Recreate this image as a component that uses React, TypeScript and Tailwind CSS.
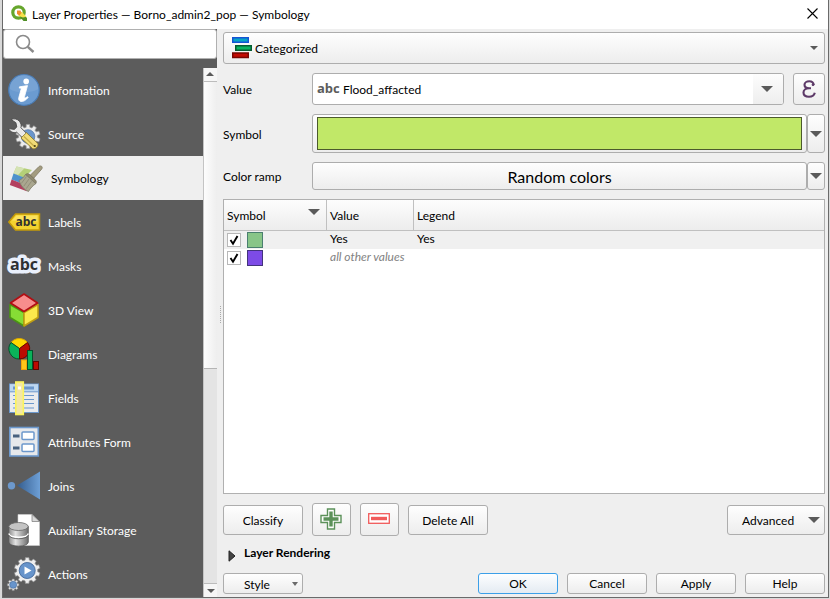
import React, { useState } from "react";

const buttonFace =
  "rounded-[3px] border border-[#adadad] bg-linear-to-b from-[#fefefe] to-[#ededed]";

function DownArrow({ small = false }: { small?: boolean }) {
  return (
    <svg
      aria-hidden="true"
      className={small ? "h-1 w-2 shrink-0" : "h-1.5 w-3 shrink-0"}
      viewBox="0 0 12 6"
      preserveAspectRatio="none"
    >
      <path d="M0 0h12L6 6z" fill="#5a5a5a" />
    </svg>
  );
}

function gearPath(cx: number, cy: number, outer: number, inner: number, teeth: number) {
  const points: string[] = [];
  const step = (Math.PI * 2) / teeth;
  for (let i = 0; i < teeth; i++) {
    const a = i * step - Math.PI / 2;
    const corners: [number, number][] = [
      [a - step * 0.32, inner],
      [a - step * 0.22, outer],
      [a + step * 0.22, outer],
      [a + step * 0.32, inner],
    ];
    corners.forEach(([t, r]) =>
      points.push(`${(cx + Math.cos(t) * r).toFixed(2)} ${(cy + Math.sin(t) * r).toFixed(2)}`)
    );
  }
  return `M${points.join("L")}Z`;
}

function Icon({ children, className = "h-8 w-8" }: { children: React.ReactNode; className?: string }) {
  return (
    <svg aria-hidden="true" className={`${className} shrink-0 overflow-visible`} viewBox="0 0 32 32">
      {children}
    </svg>
  );
}

const InfoIcon = () => (
  <Icon>
    <circle cx="16" cy="16" r="15.3" fill="#6b9bd0" stroke="#4a7cb5" strokeWidth="1.2" />
    <path d="M1.8 15a14.2 14.2 0 0 1 28.4 0c-6 4-22 5-28.4 0z" fill="#8fb3dd" opacity=".35" />
    <circle cx="18.2" cy="7.4" r="2.8" fill="#fff" />
    <path
      d="M11.5 12.8l8-1.2-3 11.200c-.3 1.400.8 1.600 3-.2l.6.9c-2.400 3-5 4.300-7.200 4-2-.3-2.600-2-2.100-3.900l2.300-8.300c.2-1-.4-1.200-1.800-1.200z"
      fill="#fff"
      stroke="#fff"
      strokeWidth=".8"
    />
  </Icon>
);

const SourceIcon = () => (
  <Icon>
    <path d={gearPath(20, 18.5, 12.2, 9.4, 10)} fill="#ececec" stroke="#9a9a9a" strokeWidth=".7" />
    <circle cx="20" cy="18.5" r="6.8" fill="#6b96cb" stroke="#4b6fa0" strokeWidth=".7" />
    <path
      d="M3 1.5C6 .2 9.500.8 11.500 3.400c1.700 2 2 4.300 1.400 6.300l7 7-4.200 4.300-7-6.800C5.500 15.300 2 14 .6 10.600l5.700.8 2.500-2.400-.9-4.300z"
      fill="#e9e9e9"
      stroke="#4c4c4c"
      strokeWidth=".9"
      strokeLinejoin="round"
    />
    <path d="M18.500 14.700l-5.500 5.300 11.500 10.500c2.500 1.400 6.500-2.200 5.300-5z" fill="#f1dc78" stroke="#8c7a29" strokeWidth=".9" />
    <path d="M16 18.500L26 28" stroke="#c4ab45" strokeWidth="1.2" />
    <circle cx="26.800" cy="28" r="1.100" fill="#4c4210" />
  </Icon>
);

const SymbologyIcon = () => (
  <svg aria-hidden="true" className="h-8 w-[35px] shrink-0 overflow-visible" viewBox="0 0 35 32">
    <path d="M8.500 4.500L24 8l-8 8-10.500-4.500z" fill="#b4cf78" />
    <path d="M8.500 4.500l8 1.800L10 13l-4.500-1.500z" fill="#d5e3b4" />
    <path d="M5.500 11.500L16 15.500 12.500 21 3.500 17.500z" fill="#4d92cc" />
    <path d="M3.500 17.500l9 3.500 7 8.500L1.800 23z" fill="#b3405f" />
    <path d="M21.500 14L31 4.500c2-1.500 4.200.3 2.700 2.600L25 17z" fill="#a39c80" stroke="#7d7760" strokeWidth=".8" />
    <path d="M17.500 12.500c1.500-1.200 3-1.200 4.500.3l5 4.700c1.500 1.500 1.700 2.700.8 4.200z" fill="#8f896e" stroke="#6f6a57" strokeWidth=".7" />
    <path d="M17.500 12.500l10.300 9.200c-2.500 1.500-5.300 4.300-7.300 7.800C16 27.500 12.500 23.500 11 18.500c2.700-1.200 5-3.500 6.500-6z" fill="#aaa78f" stroke="#7e7b68" strokeWidth=".8" />
    <path d="M18.500 14.500l-5.200 7M21 17l-5.300 7.300M23.500 19.300l-5.300 7.400" stroke="#86836f" strokeWidth=".7" />
  </svg>
);

const LabelsIcon = () => (
  <Icon>
    <path d="M.8 16L7.500 8h24v16h-24z" fill="#f3d22e" stroke="#c49a08" strokeWidth="1.500" />
    <path d="M4 14.500L8.500 9.500h21v6z" fill="#fae25e" />
    <text x="18" y="20" textAnchor="middle" fontFamily="Open Sans, sans-serif" fontWeight="700" fontSize="12" fill="#303030">
      abc
    </text>
  </Icon>
);

const MasksIcon = () => (
  <Icon>
    <text
      x="16"
      y="20"
      textAnchor="middle"
      fontFamily="Open Sans, sans-serif"
      fontWeight="700"
      fontSize="16"
      fill="#2e3134"
      stroke="#eaf0fc"
      strokeWidth="7"
      strokeLinejoin="round"
      paintOrder="stroke"
    >
      abc
    </text>
  </Icon>
);

const CubeIcon = () => (
  <Icon>
    <path d="M2 10.500l14 8V32L2 23.500z" fill="#86dc35" stroke="#4a9414" strokeWidth="1.600" strokeLinejoin="round" />
    <path d="M30 10.500l-14 8V32l14-8.500z" fill="#fbe84c" stroke="#bf9e13" strokeWidth="1.600" strokeLinejoin="round" />
    <path d="M16 0L29.500 9 16 17.500 2.500 9z" fill="#f78d8d" stroke="#b10e13" strokeWidth="1.600" strokeLinejoin="round" />
  </Icon>
);

const DiagramsIcon = () => (
  <Icon>
    <path d="M11.500 10.500L3 4.500a10.500 10.500 0 0 1 16.500 0z" fill="#ffd900" stroke="#d9a600" />
    <path d="M11.500 10.500V21A10.300 10.300 0 0 1 3 4.500z" fill="#0ab25a" stroke="#05502b" />
    <path d="M11.500 10.500V21A10.300 10.300 0 0 0 19.500 4.500z" fill="#bb0b02" stroke="#5d0601" />
    <rect x="13.500" y="22" width="5" height="9.500" fill="#ffc61a" stroke="#f0a30a" />
    <rect x="19.500" y="12.500" width="5" height="19" fill="#0ab25a" stroke="#05502b" />
    <rect x="25.500" y="23.500" width="5" height="8" fill="#bb0b02" stroke="#5d0601" />
  </Icon>
);

const FieldsIcon = () => (
  <Icon>
    <rect x="1.500" y="2" width="29" height="28.500" fill="#e9ebee" stroke="#6c98cc" />
    <rect x="2" y="2.500" width="28" height="7" fill="#bcd7f1" />
    <path d="M1.500 9.800h29" stroke="#6c98cc" />
    <rect x="5" y="4.500" width="21" height="3" fill="#6c98cc" />
    <path d="M5 13.500h21M5 17.500h21M5 21.500h21M5 26h21" stroke="#6c98cc" strokeWidth="1.200" />
    <rect x="7.800" y="0" width="7.500" height="32.500" fill="#f2e7a6" stroke="#fbf45c" strokeWidth="1.600" />
    <rect x="10" y="4.500" width="3" height="3" fill="#fff" />
  </Icon>
);

const FormIcon = () => (
  <Icon>
    <rect x="1.800" y="1.500" width="28.500" height="28.500" fill="#e7e9ec" stroke="#6c98cc" strokeWidth="1.600" />
    <rect x="14" y="6" width="12" height="7.500" rx="1" fill="#fff" stroke="#6c98cc" strokeWidth="1.500" />
    <rect x="14" y="18" width="12" height="7.500" rx="1" fill="#fff" stroke="#6c98cc" strokeWidth="1.500" />
    <path d="M5 10h6.500M5 22h6.500" stroke="#49627f" strokeWidth="3" />
  </Icon>
);

const JoinsIcon = () => (
  <Icon>
    <defs>
      <linearGradient id="joinFill">
        <stop offset="0" stopColor="#345c8d" />
        <stop offset="1" stopColor="#6ea0d7" />
      </linearGradient>
    </defs>
    <path d="M9 15.500L32 1.500v28z" fill="url(#joinFill)" />
    <circle cx="3.500" cy="15.800" r="3.700" fill="#6c98cc" />
  </Icon>
);

const StorageIcon = () => (
  <Icon>
    <defs>
      <linearGradient id="drum">
        <stop offset="0" stopColor="#8d8d8d" />
        <stop offset=".35" stopColor="#e3e3e3" />
        <stop offset="1" stopColor="#6d6d6d" />
      </linearGradient>
    </defs>
    <path d="M10 .5h14l7.500 7v24H10z" fill="#fff" stroke="#d0d0d0" strokeWidth=".6" />
    <path d="M24 .5v7h7.500z" fill="#d9d9d9" stroke="#777" strokeWidth=".7" />
    <path d="M.8 12.500v15.500c0 5.500 19.500 5.500 19.500 0V12.500z" fill="url(#drum)" stroke="#555" strokeWidth=".8" />
    <path d="M.8 19.500c1 5 18.500 5 19.500 0" fill="none" stroke="#fff" strokeWidth="1.300" />
    <path d="M.8 21c1 5 18.500 5 19.500 0" fill="none" stroke="#555" strokeWidth=".8" />
    <ellipse cx="10.500" cy="12.500" rx="9.700" ry="4" fill="#c4c4c4" stroke="#666" strokeWidth=".8" />
  </Icon>
);

const ActionsIcon = () => (
  <Icon>
    <path d={gearPath(19.2, 12.5, 13, 10.6, 10)} fill="#efefef" stroke="#888" strokeWidth=".7" />
    <circle cx="19.200" cy="12.500" r="8" fill="#6794cb" stroke="#44699a" strokeWidth=".9" />
    <path d="M16.500 8.500v8l7-4z" fill="#fff" />
    <path d={gearPath(5.2, 26.8, 5.9, 4.5, 8)} fill="#e5e5e5" stroke="#888" strokeWidth=".6" />
    <circle cx="5.200" cy="26.800" r="3.500" fill="#6794cb" stroke="#44699a" strokeWidth=".6" />
  </Icon>
);

const pages = [
  { name: "Information", Glyph: InfoIcon },
  { name: "Source", Glyph: SourceIcon },
  { name: "Symbology", Glyph: SymbologyIcon },
  { name: "Labels", Glyph: LabelsIcon },
  { name: "Masks", Glyph: MasksIcon },
  { name: "3D View", Glyph: CubeIcon },
  { name: "Diagrams", Glyph: DiagramsIcon },
  { name: "Fields", Glyph: FieldsIcon },
  { name: "Attributes Form", Glyph: FormIcon },
  { name: "Joins", Glyph: JoinsIcon },
  { name: "Auxiliary Storage", Glyph: StorageIcon },
  { name: "Actions", Glyph: ActionsIcon },
];

function TitleBar() {
  return (
    <header className="flex h-[29px] shrink-0 items-center bg-white pr-2 pl-2">
      <svg aria-hidden="true" className="mr-[5px] mb-1 h-4 w-4 shrink-0" viewBox="0 0 16 16">
        <circle cx="7.500" cy="7.500" r="5.700" fill="none" stroke="#66a62c" strokeWidth="3.200" />
        <path d="M9 9h3l4 4v3h-3.500L9 12z" fill="#4f8f24" />
        <path d="M7 7h4l4.500 4.800L12 12.500 7.500 11z" fill="#f3e04a" />
        <path d="M6 5.500h3.500l1 2.500-2 2.500L6 9z" fill="#f08a2c" />
      </svg>
      <h1 className="flex-1 truncate">Layer Properties — Borno_admin2_pop — Symbology</h1>
      <button type="button" aria-label="Close" className="flex h-6 w-4 items-center justify-center pb-0.5">
        <svg aria-hidden="true" className="h-[11px] w-[11px]" viewBox="0 0 11 11">
          <path d="M.5.5l10 10M10.500.5l-10 10" stroke="#000" strokeWidth="1.100" />
        </svg>
      </button>
    </header>
  );
}

function Sidebar() {
  const [current, setCurrent] = useState("Symbology");
  return (
    <aside className="flex w-[214px] shrink-0 flex-col bg-[#5c5c5c]">
      <label className="flex h-[30px] shrink-0 items-center rounded-[3px] border border-[#b0b0b0] bg-white pl-[11px]">
        <svg aria-hidden="true" className="h-5 w-5 shrink-0" viewBox="0 0 20 20" fill="none" stroke="#8a8a8a">
          <circle cx="8" cy="8" r="6.500" strokeWidth="1.600" />
          <path d="M12.800 12.800l5.700 5.200" strokeWidth="2.400" />
        </svg>
        <input type="text" aria-label="Search" className="min-w-0 flex-1 px-2 outline-none" />
      </label>
      <div className="mt-[9px] flex min-h-0 flex-1">
        <nav className="min-w-0 flex-1 overflow-hidden">
          {pages.map(({ name, Glyph }) => (
            <button
              key={name}
              type="button"
              onClick={() => setCurrent(name)}
              className={
                name === current
                  ? "flex h-11 w-full items-center gap-2 bg-[#efefef] pl-[5px] text-left text-black"
                  : "flex h-11 w-full items-center gap-2 pl-[5px] text-left text-white"
              }
            >
              <Glyph />
              <span className="pt-0.5">{name}</span>
            </button>
          ))}
        </nav>
        <div aria-hidden="true" className="flex w-3.5 shrink-0 flex-col border-l border-[#c4c4c4] bg-[#e4e4e4]">
          <div className="flex h-3.5 shrink-0 rotate-180 items-center justify-center border-t border-[#bcbcbc] bg-[#f6f6f6]">
            <DownArrow small />
          </div>
          <div className="h-[287px] shrink-0 border-b border-[#b4b4b4] bg-linear-to-r from-[#fdfdfd] to-[#eeeeee]" />
          <div className="flex-1" />
          <div className="flex h-3.5 shrink-0 items-center justify-center border-t border-[#bcbcbc] bg-[#f6f6f6]">
            <DownArrow small />
          </div>
        </div>
      </div>
    </aside>
  );
}

function CategoryRow({ color, label, legend, other }: { color: string; label: string; legend: string; other?: boolean }) {
  return (
    <tr className={other ? "h-[18px]" : "h-[18px] bg-[#f0f0f0]"}>
      <td className="p-0">
        <div className="flex h-[18px] items-center gap-1.5 pl-[3px]">
          <span className="relative h-3.5 w-3.5">
            <input
              type="checkbox"
              defaultChecked
              aria-label={`Show ${label}`}
              className="peer block h-3.5 w-3.5 appearance-none border border-[#b8b8b8] bg-white"
            />
            <svg
              aria-hidden="true"
              className="pointer-events-none absolute inset-0 hidden h-3.5 w-3.5 peer-checked:block"
              viewBox="0 0 14 14"
            >
              <path d="M3.500 7l2.500 3.800L10.500 3" fill="none" stroke="#000" strokeWidth="1.900" />
            </svg>
          </span>
          <span className={`h-4 w-4 border ${color}`} />
        </div>
      </td>
      <td className="p-0">
        <div className={other ? "flex h-[18px] items-center pb-0.5 pl-[3px] text-[#828282] italic" : "flex h-[18px] items-center pb-0.5 pl-[3px]"}>
          {label}
        </div>
      </td>
      <td className="p-0">
        <div className="flex h-[18px] items-center pb-0.5 pl-[3px]">{legend}</div>
      </td>
    </tr>
  );
}

function CategoryTable() {
  return (
    <div className="mt-[9px] min-h-0 flex-1 overflow-hidden border border-[#b0b0b0] bg-white">
      <table className="w-full table-fixed border-separate border-spacing-0 whitespace-nowrap">
        <colgroup>
          <col className="w-[103px]" />
          <col className="w-[87px]" />
          <col />
        </colgroup>
        <thead>
          <tr className="h-[31px] bg-linear-to-b from-[#fdfdfd] to-[#ececec] text-left">
            <th className="border-r border-b border-[#c0c0c0] p-0 font-normal">
              <div className="flex items-center justify-between pt-0.5 pr-1.5 pl-[3px]">
                Symbol
                <span className="pb-2">
                  <DownArrow />
                </span>
              </div>
            </th>
            <th className="border-r border-b border-[#c0c0c0] p-0 pt-0.5 pl-[3px] font-normal">Value</th>
            <th className="border-b border-[#c0c0c0] p-0 pt-0.5 pl-[3px] font-normal">Legend</th>
          </tr>
        </thead>
        <tbody>
          <CategoryRow color="border-[#4a7f6f] bg-[#88c588]" label="Yes" legend="Yes" />
          <CategoryRow color="border-[#43347c] bg-[#7d4be6]" label="all other values" legend="" other />
        </tbody>
      </table>
    </div>
  );
}

function SymbologyPanel() {
  const dialogButton = `${buttonFace} h-[21px] w-20`;
  return (
    <main className="relative flex min-w-0 flex-1 flex-col pt-[3px] pr-[3px] pb-[3px] pl-1.5">
      <div aria-hidden="true" className="absolute top-[277px] left-[3px] h-[17px] border-l border-dotted border-[#aaaaaa]" />

      <div className={`${buttonFace} relative h-8 shrink-0`}>
        <svg aria-hidden="true" className="pointer-events-none absolute top-1 left-2 h-[22px] w-5" viewBox="0 0 20 22">
          <rect x=".75" y=".75" width="15.500" height="4.500" fill="#08a5c6" stroke="#1454d4" strokeWidth="1.500" />
          <rect x="3.750" y="8.750" width="15.500" height="4.500" fill="#0ab360" stroke="#045c31" strokeWidth="1.500" />
          <rect x=".75" y="16" width="15.500" height="4.500" fill="#c10b02" stroke="#7a0601" strokeWidth="1.500" />
        </svg>
        <select aria-label="Renderer" className="h-full w-full appearance-none bg-transparent pt-0.5 pr-6 pl-[31px] outline-none">
          <option>Categorized</option>
        </select>
        <span className="pointer-events-none absolute inset-y-0 right-1.5 flex items-center">
          <DownArrow small />
        </span>
      </div>

      <div className="mt-[9px] flex h-8 shrink-0 items-center">
        <label htmlFor="value-field" className="w-[89px] shrink-0 pt-0.5">
          Value
        </label>
        <div className="relative h-full min-w-0 flex-1 overflow-hidden rounded-[3px] border border-[#adadad] bg-white">
          <span
            aria-hidden="true"
            className="pointer-events-none absolute top-1 left-1 font-['Open_Sans',sans-serif] text-[13px] leading-5 font-bold text-[#5c5c5c]"
          >
            abc
          </span>
          <select id="value-field" className="h-full w-full appearance-none bg-transparent pt-0.5 pr-8 pl-[30px] outline-none">
            <option>Flood_affacted</option>
          </select>
          <span className="pointer-events-none absolute inset-y-0 right-0 flex w-[30px] items-center justify-center bg-linear-to-b from-[#fdfdfd] to-[#eeeeee] pr-0.5">
            <DownArrow />
          </span>
        </div>
        <button type="button" aria-label="Expression" className={`${buttonFace} ml-[9px] flex h-8 w-8 items-center justify-center`}>
          <svg aria-hidden="true" className="h-[18px] w-3.5" viewBox="0 0 14 18" fill="none" stroke="#5d3a68">
            <path
              d="M11.800 5.200C11.500 2.500 9.500 1.300 7.300 1.300 4.500 1.300 2.500 2.700 2.500 4.800c0 2.200 2 3.500 4.700 3.500H9M7.200 8.300C3.500 8.300 1.500 10 1.500 12.600c0 2.600 2.300 4.200 5.500 4.200 3 0 5.200-1.500 5.800-4"
              strokeWidth="2.100"
            />
            <circle cx="11" cy="4.800" r=".9" fill="#5d3a68" />
          </svg>
        </button>
      </div>

      <div className="mt-[9px] flex h-[39px] shrink-0 items-center">
        <span className="w-[89px] shrink-0 pt-0.5">Symbol</span>
        <button type="button" aria-label="Change symbol" className={`${buttonFace} h-full min-w-0 flex-1 py-0.5 pr-1 pl-1`}>
          <span className="block h-full w-full border border-[#4c5a2c] bg-[#c1e868]" />
        </button>
        <button type="button" aria-label="Symbol options" className={`${buttonFace} flex h-full w-[18px] items-center justify-center`}>
          <DownArrow />
        </button>
      </div>

      <div className="mt-[9px] flex h-7 shrink-0 items-center">
        <span className="w-[89px] shrink-0 pt-0.5">Color ramp</span>
        <button type="button" className={`${buttonFace} h-full min-w-0 flex-1 pt-0.5 text-base`}>
          Random colors
        </button>
        <button type="button" aria-label="Color ramp options" className={`${buttonFace} flex h-full w-[18px] items-center justify-center`}>
          <DownArrow />
        </button>
      </div>

      <CategoryTable />

      <div className="mt-[9px] flex h-[33px] shrink-0 items-center gap-[9px]">
        <button type="button" className={`${buttonFace} h-[30px] w-20 pt-0.5`}>
          Classify
        </button>
        <button type="button" aria-label="Add category" className={`${buttonFace} flex h-[33px] w-[39px] items-center justify-center pr-0.5 pb-0.5`}>
          <svg aria-hidden="true" className="h-[22px] w-[22px]" viewBox="0 0 22 22">
            <path d="M7.500 1h7v6.500H21v7h-6.500V21h-7v-6.500H1v-7h6.500z" fill="#fff" stroke="#5b9159" strokeWidth="1.400" />
            <path d="M11 3.500v15M3.500 11h15" stroke="#5b9159" strokeWidth="3.400" />
          </svg>
        </button>
        <button type="button" aria-label="Remove category" className={`${buttonFace} flex h-[33px] w-[39px] items-center justify-center pr-0.5 pb-0.5`}>
          <svg aria-hidden="true" className="h-[11px] w-[22px]" viewBox="0 0 22 11">
            <rect x=".7" y=".7" width="20.600" height="9.600" fill="#fff" stroke="#f15a5a" strokeWidth="1.300" />
            <path d="M3 5.500h16" stroke="#f15a5a" strokeWidth="3.400" />
          </svg>
        </button>
        <button type="button" className={`${buttonFace} h-[30px] w-20 pt-0.5`}>
          Delete All
        </button>
        <button type="button" className={`${buttonFace} ml-auto flex h-[30px] w-[98px] items-center justify-between pr-1 pl-3.5`}>
          <span className="pt-0.5">Advanced</span>
          <DownArrow />
        </button>
      </div>

      <button type="button" className="mt-2 flex h-[18px] shrink-0 items-center gap-2 pl-[5px] font-bold">
        <svg aria-hidden="true" className="mt-1.5 h-3 w-2" viewBox="0 0 8 12">
          <path d="M1 .8l6 5.200-6 5.200z" fill="#444" stroke="#222" />
        </svg>
        Layer Rendering
      </button>

      <footer className="mt-[11px] flex shrink-0 gap-[9px]">
        <button type="button" className={`${buttonFace} mr-auto flex h-[21px] w-20 items-center justify-between pr-1 pl-5`}>
          <span className="pt-0.5">Style</span>
          <svg aria-hidden="true" className="h-1 w-1.5" viewBox="0 0 6 4">
            <path d="M0 0h6L3 4z" fill="#6a6a6a" />
          </svg>
        </button>
        <button type="button" className="h-[21px] w-20 rounded-[3px] border border-[#3c9fe8] bg-linear-to-b from-[#fdfeff] to-[#e4ebf2]">
          OK
        </button>
        <button type="button" className={dialogButton}>
          Cancel
        </button>
        <button type="button" className={dialogButton}>
          Apply
        </button>
        <button type="button" className={dialogButton}>
          Help
        </button>
      </footer>
    </main>
  );
}

export default function App() {
  return (
    <div className="flex h-screen bg-[#d9d9d9] pr-px pb-px pl-0.5 font-['Lato','Noto_Sans',sans-serif] text-[12px] leading-4 text-black">
      <div className="flex min-w-0 flex-1 flex-col border-x border-b border-[#6a6a6a] bg-[#efefef]">
        <TitleBar />
        <div className="flex min-h-0 flex-1">
          <Sidebar />
          <SymbologyPanel />
        </div>
      </div>
    </div>
  );
}
